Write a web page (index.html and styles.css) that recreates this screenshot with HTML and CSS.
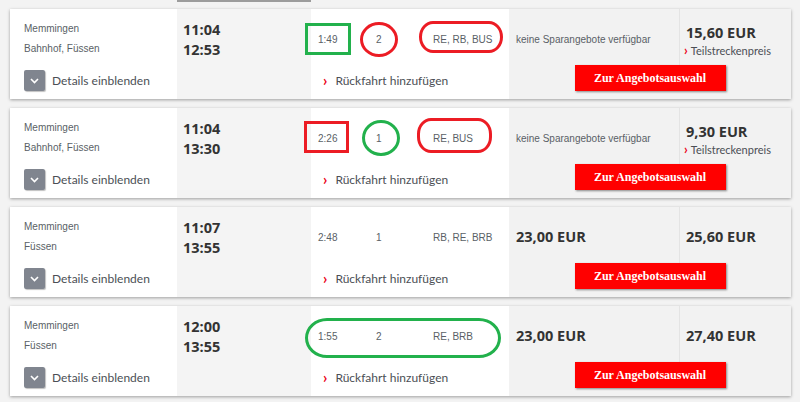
FILE: index.html
```html
<!DOCTYPE html>
<html lang="de">
<head>
    <meta charset="UTF-8">
    <title>Verbindungen</title>
    <link rel="stylesheet" href="styles.css">
</head>
<body>
    <div class="liste">
        <div class="rest-oben"></div>

        <!-- Verbindung 1 -->
        <div class="verbindung">
            <div class="sp-route">
                <div class="halt">Memmingen</div>
                <div class="halt">Bahnhof, Füssen</div>
                <div class="details"><span class="details-btn"><svg width="9" height="6" viewBox="0 0 9 6"><path d="M1 1 L4.5 4.5 L8 1" fill="none" stroke="#fff" stroke-width="1.6"/></svg></span>Details einblenden</div>
            </div>
            <div class="sp-zeit">
                <div>11:04</div>
                <div>12:53</div>
            </div>
            <div class="sp-info">
                <div class="info-zeile">
                    <span class="dauer">1:49</span>
                    <span class="umst">2</span>
                    <span class="prod">RE, RB, BUS</span>
                </div>
                <div class="rueck"><span class="pfeil">›</span>Rückfahrt hinzufügen</div>
            </div>
            <div class="sp-angebot">
                <div class="preise">
                    <div class="preis-zelle klein">keine Sparangebote verfügbar</div>
                    <div class="preis-zelle trenner mit-teil">
                        <div class="preis">15,60 EUR</div>
                        <div class="teil"><span class="pfeil">›</span>Teilstreckenpreis</div>
                    </div>
                </div>
                <div class="btn-angebot">Zur Angebotsauswahl</div>
            </div>
            <div class="mark eckig gruen" style="left:295px;top:14px;width:46px;height:32px"></div>
            <div class="mark kreis rot" style="left:350px;top:13px;width:38px;height:35px"></div>
            <div class="mark oval rot" style="left:409px;top:12px;width:84px;height:32px"></div>
        </div>

        <!-- Verbindung 2 -->
        <div class="verbindung">
            <div class="sp-route">
                <div class="halt">Memmingen</div>
                <div class="halt">Bahnhof, Füssen</div>
                <div class="details"><span class="details-btn"><svg width="9" height="6" viewBox="0 0 9 6"><path d="M1 1 L4.5 4.5 L8 1" fill="none" stroke="#fff" stroke-width="1.6"/></svg></span>Details einblenden</div>
            </div>
            <div class="sp-zeit">
                <div>11:04</div>
                <div>13:30</div>
            </div>
            <div class="sp-info">
                <div class="info-zeile">
                    <span class="dauer">2:26</span>
                    <span class="umst">1</span>
                    <span class="prod">RE, BUS</span>
                </div>
                <div class="rueck"><span class="pfeil">›</span>Rückfahrt hinzufügen</div>
            </div>
            <div class="sp-angebot">
                <div class="preise">
                    <div class="preis-zelle klein">keine Sparangebote verfügbar</div>
                    <div class="preis-zelle trenner mit-teil">
                        <div class="preis">9,30 EUR</div>
                        <div class="teil"><span class="pfeil">›</span>Teilstreckenpreis</div>
                    </div>
                </div>
                <div class="btn-angebot">Zur Angebotsauswahl</div>
            </div>
            <div class="mark eckig rot" style="left:294px;top:13px;width:45px;height:32px"></div>
            <div class="mark kreis gruen" style="left:352px;top:12px;width:38px;height:36px"></div>
            <div class="mark oval rot" style="left:407px;top:10px;width:75px;height:35px"></div>
        </div>

        <!-- Verbindung 3 -->
        <div class="verbindung">
            <div class="sp-route">
                <div class="halt">Memmingen</div>
                <div class="halt">Füssen</div>
                <div class="details"><span class="details-btn"><svg width="9" height="6" viewBox="0 0 9 6"><path d="M1 1 L4.5 4.5 L8 1" fill="none" stroke="#fff" stroke-width="1.6"/></svg></span>Details einblenden</div>
            </div>
            <div class="sp-zeit">
                <div>11:07</div>
                <div>13:55</div>
            </div>
            <div class="sp-info">
                <div class="info-zeile">
                    <span class="dauer">2:48</span>
                    <span class="umst">1</span>
                    <span class="prod">RB, RE, BRB</span>
                </div>
                <div class="rueck"><span class="pfeil">›</span>Rückfahrt hinzufügen</div>
            </div>
            <div class="sp-angebot">
                <div class="preise">
                    <div class="preis-zelle"><div class="preis">23,00 EUR</div></div>
                    <div class="preis-zelle trenner"><div class="preis">25,60 EUR</div></div>
                </div>
                <div class="btn-angebot">Zur Angebotsauswahl</div>
            </div>
        </div>

        <!-- Verbindung 4 -->
        <div class="verbindung">
            <div class="sp-route">
                <div class="halt">Memmingen</div>
                <div class="halt">Füssen</div>
                <div class="details"><span class="details-btn"><svg width="9" height="6" viewBox="0 0 9 6"><path d="M1 1 L4.5 4.5 L8 1" fill="none" stroke="#fff" stroke-width="1.6"/></svg></span>Details einblenden</div>
            </div>
            <div class="sp-zeit">
                <div>12:00</div>
                <div>13:55</div>
            </div>
            <div class="sp-info">
                <div class="info-zeile">
                    <span class="dauer">1:55</span>
                    <span class="umst">2</span>
                    <span class="prod">RE, BRB</span>
                </div>
                <div class="rueck"><span class="pfeil">›</span>Rückfahrt hinzufügen</div>
            </div>
            <div class="sp-angebot">
                <div class="preise">
                    <div class="preis-zelle"><div class="preis">23,00 EUR</div></div>
                    <div class="preis-zelle trenner"><div class="preis">27,40 EUR</div></div>
                </div>
                <div class="btn-angebot">Zur Angebotsauswahl</div>
            </div>
            <div class="mark oval gruen breit" style="left:295px;top:12px;width:196px;height:40px"></div>
        </div>
    </div>
</body>
</html>
```

FILE: styles.css
```css
/* Grundlayout */
body {
    margin: 0;
    background-color: #f3f3f3;
    font-family: "Liberation Sans", Arial, sans-serif;
    color: #555;
    overflow: hidden;
}

.liste {
    padding-left: 10px;
    width: 781px;
}

/* Rest der vorherigen Verbindung oben */
.rest-oben {
    margin-left: 167px;
    width: 134px;
    height: 2px;
    background-color: #9c9c9c;
    margin-bottom: 7px;
}

/* Eine Verbindung */
.verbindung {
    position: relative;
    display: flex;
    height: 90px;
    margin-bottom: 9px;
    background-color: #fff;
    box-shadow: 0 1px 3px rgba(0, 0, 0, 0.35);
}

/* Spalte Start / Ziel */
.sp-route {
    flex: none;
    width: 167px;
    padding: 10px 0 0 14px;
    box-sizing: border-box;
    background-color: #fff;
}
.halt {
    font-size: 10px;
    line-height: 20px;
    color: #5a5f66;
}
.details {
    display: flex;
    align-items: center;
    gap: 7px;
    margin-top: 11px;
    font-family: Lato, sans-serif;
    font-size: 12px;
    color: #4b4f55;
}
.details-btn {
    width: 21px;
    height: 21px;
    border-radius: 2px;
    background-color: #80858f;
    box-shadow: 1px 1px 1px rgba(0, 0, 0, 0.25);
    display: flex;
    align-items: center;
    justify-content: center;
}

/* Spalte Uhrzeiten */
.sp-zeit {
    flex: none;
    width: 134px;
    padding: 11px 0 0 6px;
    box-sizing: border-box;
    background-color: #f4f4f4;
    font-family: "Open Sans", sans-serif;
    font-weight: bold;
    font-size: 14.5px;
    line-height: 20px;
    color: #333;
}

/* Spalte Dauer / Umstiege / Produkte */
.sp-info {
    flex: none;
    width: 198px;
    background-color: #fff;
    display: flex;
    flex-direction: column;
}
.info-zeile {
    display: flex;
    height: 60px;
    align-items: center;
    font-size: 10px;
    color: #5a5f66;
}
.dauer {
    width: 58px;
    padding-left: 7px;
    box-sizing: border-box;
}
.umst {
    width: 64px;
    padding-left: 7px;
    box-sizing: border-box;
}
.rueck {
    display: flex;
    align-items: center;
    height: 22px;
    padding-left: 12px;
    font-family: Lato, sans-serif;
    font-size: 12px;
    color: #4b4f55;
}
.pfeil {
    color: #ec0016;
    font-weight: bold;
    font-size: 15px;
    margin-right: 8px;
    line-height: 1;
}

/* Spalte Preise */
.sp-angebot {
    flex: 1;
    min-width: 0;
    background-color: #f2f2f2;
    display: flex;
    flex-direction: column;
}
.preise {
    display: flex;
    height: 56px;
}
.preis-zelle {
    display: flex;
    flex-direction: column;
    justify-content: center;
    padding: 4px 0 0 7px;
    box-sizing: border-box;
    width: 170px;
    flex: none;
}
.preis-zelle.trenner {
    flex: 1;
    border-left: 1px solid #e4e4e4;
    padding-left: 6px;
}
.preis-zelle.mit-teil {
    padding-top: 6px;
}
.klein {
    font-size: 10px;
    color: #5a5f66;
    padding-top: 4px;
}
.preis {
    font-family: "Open Sans", sans-serif;
    font-weight: bold;
    font-size: 14.5px;
    color: #333;
    line-height: 20px;
}
.teil {
    display: flex;
    align-items: center;
    margin-top: 1px;
    margin-left: -2px;
    font-family: Lato, sans-serif;
    font-size: 11px;
    color: #4b4f55;
}
.teil .pfeil {
    margin-right: 3px;
    font-size: 13px;
}

/* Roter Knopf */
.btn-angebot {
    align-self: center;
    width: 151px;
    height: 26px;
    background-color: #ff0000;
    box-shadow: 1px 1px 2px rgba(0, 0, 0, 0.45);
    color: #fff;
    font-family: "Liberation Serif", serif;
    font-weight: bold;
    font-size: 12px;
    display: flex;
    align-items: center;
    justify-content: center;
}

/* Markierungen (Handzeichnung) */
.mark {
    position: absolute;
    box-sizing: border-box;
    border: 3px solid;
    pointer-events: none;
}
.rot {
    border-color: #ec1c24;
}
.gruen {
    border-color: #22b14c;
}
.kreis {
    border-radius: 50%;
}
.oval {
    border-radius: 14px / 16px;
}
.oval.breit {
    border-radius: 22px / 20px;
}
```
